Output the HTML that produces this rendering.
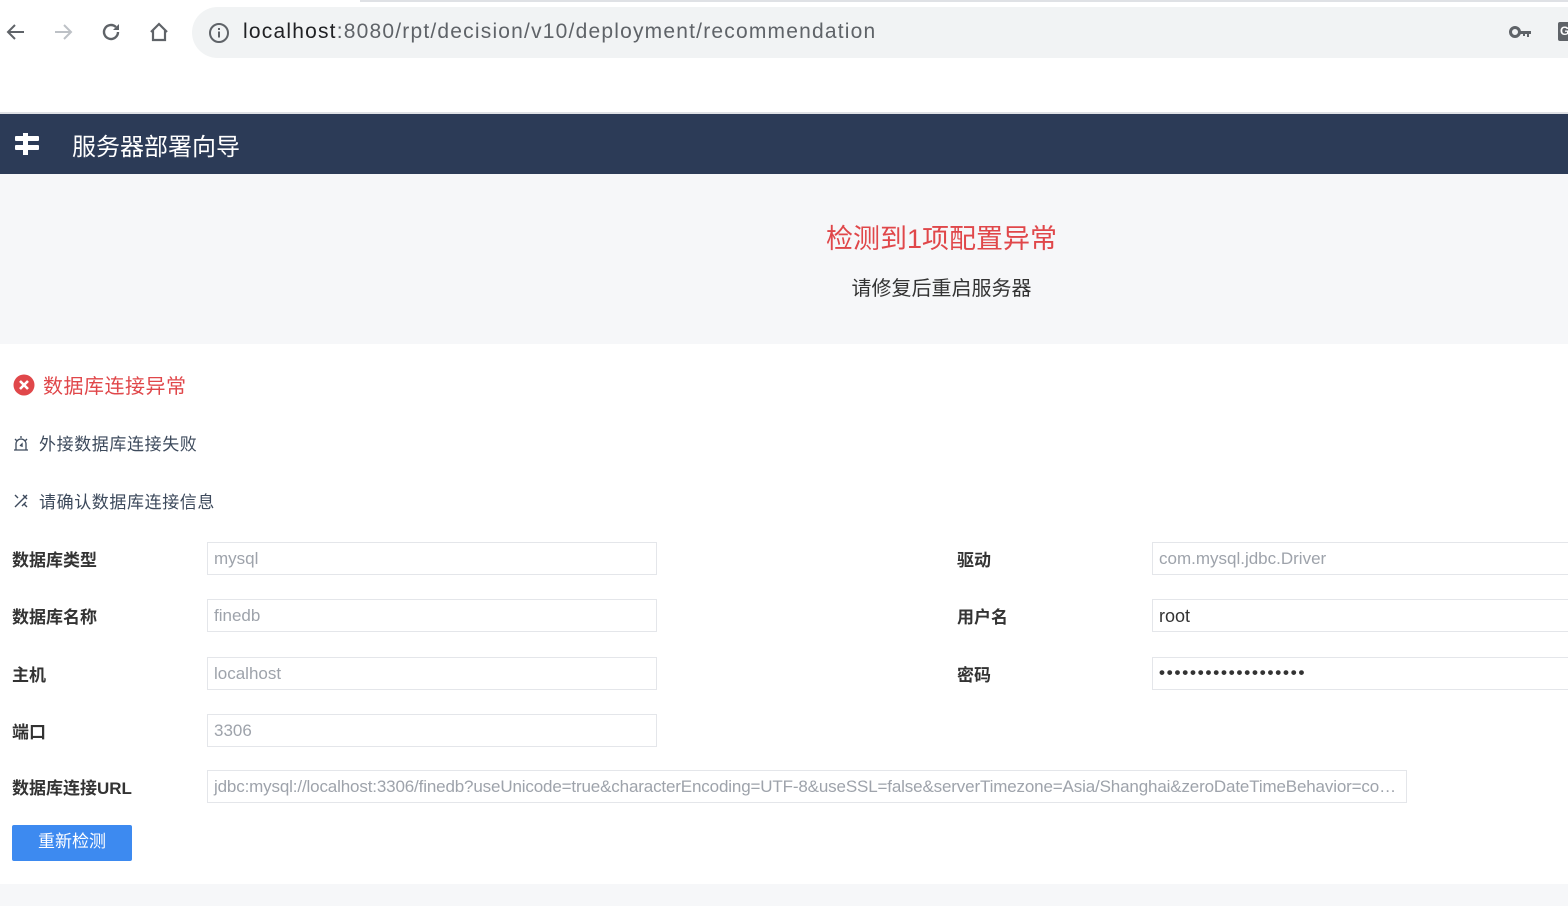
<!DOCTYPE html>
<html><head><meta charset="utf-8"><style>
*{margin:0;padding:0;box-sizing:border-box}
body{width:1568px;height:906px;overflow:hidden;background:#fff;font-family:"Liberation Sans","Noto Sans CJK SC",sans-serif;position:relative}
.abs{position:absolute}
.url{left:192px;top:7px;width:1400px;height:51px;background:#f1f3f4;border-radius:26px}
.urltxt{left:243px;top:20px;font-size:21px;color:#202124;letter-spacing:1.2px}
.urltxt span{color:#5f6368}
.nav{left:0;top:112px;width:1568px;height:62px;background:#2c3b57;border-top:2px solid #dfe1e5}
.gray{left:0;top:174px;width:1568px;height:170px;background:#f6f7f9}
.lbl{font-size:17px;font-weight:bold;color:#333}
.inp{height:33px;border:1px solid #e4e6ea;background:#fff;font-size:17px;color:#9ea3ab;padding:6px 6px;white-space:nowrap;overflow:hidden;text-overflow:ellipsis}
.t{font-size:17px;color:#3d4a5c}
</style></head><body>
<div class="abs" style="left:360px;top:0;width:1208px;height:2px;background:#dfe1e5"></div>
<svg class="abs" style="left:4px;top:20px" width="24" height="24" viewBox="0 0 24 24"><path d="M20 12H5M11 5l-7 7 7 7" fill="none" stroke="#5f6368" stroke-width="2"/></svg>
<svg class="abs" style="left:51px;top:20px" width="24" height="24" viewBox="0 0 24 24"><path d="M4 12h15M13 5l7 7-7 7" fill="none" stroke="#bdc1c6" stroke-width="2"/></svg>
<svg class="abs" style="left:99px;top:20px" width="24" height="24" viewBox="0 0 24 24"><path d="M19 12a7 7 0 1 1-2.1-5" fill="none" stroke="#5f6368" stroke-width="2.4"/><path d="M20 4v6h-6z" fill="#5f6368"/></svg>
<svg class="abs" style="left:147px;top:20px" width="24" height="24" viewBox="0 0 24 24"><path d="M4 12L12 4l8 8M6 10v10h12V10" fill="none" stroke="#5f6368" stroke-width="2.2"/></svg>
<div class="abs url"></div>
<svg class="abs" style="left:208px;top:22px" width="22" height="22" viewBox="0 0 22 22"><circle cx="11" cy="11" r="9" fill="none" stroke="#5f6368" stroke-width="2"/><path d="M11 9.5v6M11 6v2" stroke="#5f6368" stroke-width="2"/></svg>
<div class="abs urltxt">localhost<span>:8080/rpt/decision/v10/deployment/recommendation</span></div>
<svg class="abs" style="left:1509px;top:25px" width="24" height="14" viewBox="0 0 24 14"><circle cx="6" cy="7" r="4.5" fill="none" stroke="#5f6368" stroke-width="3"/><path d="M10 6h12v3h-2v3h-2V9h-2v2h-2V9h-4z" fill="#5f6368"/></svg>
<div class="abs" style="left:1558px;top:22px;width:12px;height:19px;background:#5f6368;border-radius:2px;color:#fff;font-size:12px;font-weight:bold;line-height:19px;padding-left:2px">G</div>
<div class="abs nav"></div>
<svg class="abs" style="left:15px;top:133px" width="24" height="22" viewBox="0 0 24 22"><rect x="0" y="3" width="24" height="5" rx="1" fill="#fff"/><rect x="0" y="12" width="24" height="5" rx="1" fill="#fff"/><rect x="8" y="0" width="5" height="22" fill="#fff"/></svg>
<div class="abs" style="left:72px;top:127px;font-size:24px;color:#fff">服务器部署向导</div>
<div class="abs gray"></div>
<div class="abs" style="left:0;top:217px;width:1883px;text-align:center;font-size:27px;color:#e0474a">检测到1项配置异常</div>
<div class="abs" style="left:0;top:272px;width:1883px;text-align:center;font-size:20px;color:#333">请修复后重启服务器</div>
<svg class="abs" style="left:13px;top:374px" width="22" height="22" viewBox="0 0 22 22"><circle cx="11" cy="11" r="10.5" fill="#e0474a"/><path d="M7 7l8 8M15 7l-8 8" stroke="#fff" stroke-width="2.6"/></svg>
<div class="abs" style="left:43px;top:370px;font-size:20px;color:#e0474a;letter-spacing:0.5px">数据库连接异常</div>
<svg class="abs" style="left:13px;top:435px" width="16" height="16" viewBox="0 0 16 16" fill="none" stroke="#3d4a5c" stroke-width="1.3"><path d="M3 15V9a5 5 0 0 1 10 0v6M1 15h14M8 1v2M2 4l1.5 1.5M14 4l-1.5 1.5M7 11l2-2v3"/></svg>
<div class="abs t" style="left:39px;top:430px;letter-spacing:0.6px">外接数据库连接失败</div>
<svg class="abs" style="left:13px;top:493px" width="16" height="16" viewBox="0 0 16 16" fill="none" stroke="#3d4a5c" stroke-width="1.4"><path d="M2 14L14 2M10 2l4 4M2 2l3 3M11 11l3 3M9 13l4-4"/></svg>
<div class="abs t" style="left:39px;top:488px;letter-spacing:0.6px">请确认数据库连接信息</div>

<div class="abs lbl" style="left:12px;top:546px">数据库类型</div>
<div class="abs inp" style="left:207px;top:542px;width:450px">mysql</div>
<div class="abs lbl" style="left:12px;top:603px">数据库名称</div>
<div class="abs inp" style="left:207px;top:599px;width:450px">finedb</div>
<div class="abs lbl" style="left:12px;top:661px">主机</div>
<div class="abs inp" style="left:207px;top:657px;width:450px">localhost</div>
<div class="abs lbl" style="left:12px;top:718px">端口</div>
<div class="abs inp" style="left:207px;top:714px;width:450px">3306</div>
<div class="abs lbl" style="left:12px;top:774px">数据库连接URL</div>
<div class="abs inp" style="left:207px;top:770px;width:1200px;letter-spacing:-0.15px">jdbc:mysql://localhost:3306/finedb?useUnicode=true&amp;characterEncoding=UTF-8&amp;useSSL=false&amp;serverTimezone=Asia/Shanghai&amp;zeroDateTimeBehavior=convertToNull</div>

<div class="abs lbl" style="left:957px;top:546px">驱动</div>
<div class="abs inp" style="left:1152px;top:542px;width:450px">com.mysql.jdbc.Driver</div>
<div class="abs lbl" style="left:957px;top:603px">用户名</div>
<div class="abs inp" style="left:1152px;top:599px;width:450px;color:#333;font-size:18px">root</div>
<div class="abs lbl" style="left:957px;top:661px">密码</div>
<div class="abs inp" style="left:1152px;top:657px;width:450px;color:#333;font-size:17px;font-weight:bold;padding-top:5px;letter-spacing:1.8px">•••••••••••••••••••</div>

<div class="abs" style="left:12px;top:825px;width:120px;height:36px;background:#3d8af0;border-radius:2px;color:#fff;font-size:17px;text-align:center;line-height:33px">重新检测</div>
<div class="abs" style="left:0;top:884px;width:1568px;height:22px;background:#f6f7f9"></div>
</body></html>
